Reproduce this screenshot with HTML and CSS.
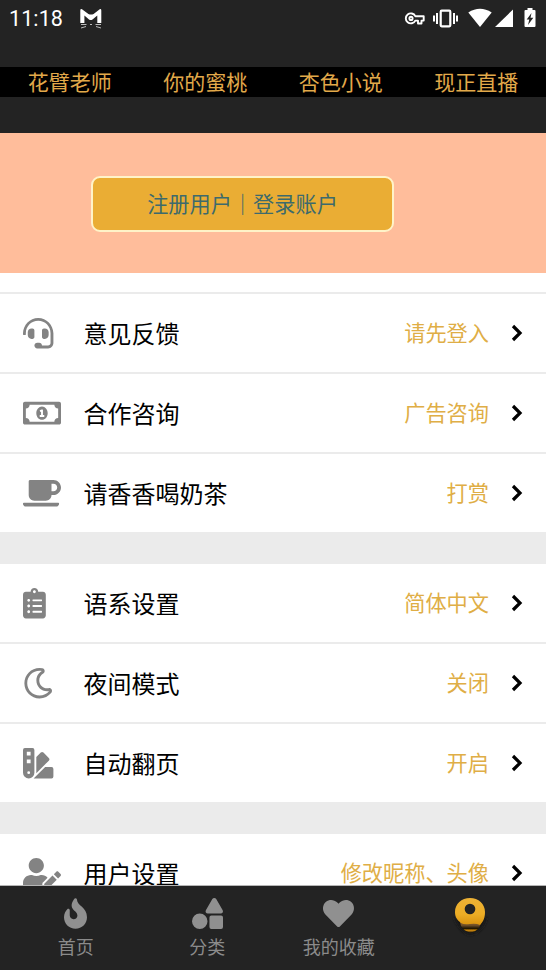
FILE: index.html
```html
<!DOCTYPE html>
<html lang="zh-CN">
<head>
<meta charset="utf-8">
<title>我的</title>
<link rel="stylesheet" href="styles.css">
</head>
<body>
<div class="screen">
  <header class="top">
    <div class="status">
      <span class="time">11:18</span>
      <svg class="cat" width="22" height="22" viewBox="0 0 22 22"><path d="M.3 15V2.500Q.3.600 2 1.200L8.400 6Q11 7 13.600 6L19.700 1.200Q21.300.600 21.300 2.500V15H17.300V7.500L12.500 11.500Q10.800 12.500 9 11.500L4.400 7.500V15Z" fill="#fff"/><path d="M1 16.500H6.500M1 20L6 18.500M15.500 16.500H21M16 18.500L21 20M10 16.500H12" stroke="#bbb" stroke-width="1" fill="none"/></svg>
      <div class="signals">
        <svg width="20" height="20" viewBox="0 0 20 20" fill="none" stroke="#fff" stroke-width="1.900"><path d="M10.300 8.200A5 5 0 1 0 10.300 12.600H13V15.500H16.500V12.600H18.700V8.200Z" stroke-linejoin="round"/><circle cx="6" cy="10.400" r="1.600"/></svg>
        <svg width="25" height="20" viewBox="0 0 25 20" fill="none" stroke="#fff"><rect x="7.700" y="2.700" width="9.600" height="15.600" rx="1" stroke-width="2.200"/><path d="M4 5V16M21 5V16" stroke-width="2"/><path d="M1 7.500V13.500M24 7.500V13.500" stroke-width="2"/></svg>
        <svg width="24" height="20" viewBox="0 0 24 20" fill="#fff"><path d="M.3 4.500Q12-3 23.700 4.500L12 19Z"/></svg>
        <svg width="18" height="20" viewBox="0 0 18 20" fill="#fff"><path d="M18 1.500V19H0Z"/></svg>
        <svg width="12" height="20" viewBox="0 0 12 20"><path d="M3.500 0H8.500V2H10.500Q11.500 2 11.500 3V18Q11.500 19 10.500 19H1.500Q.5 19 .5 18V3Q.5 2 1.500 2H3.500Z" fill="#fff"/><path d="M7.500 5L2.700 11.500H5.300L4 17L9.300 9.800H6.500Z" fill="#232323"/></svg>
      </div>
    </div>
    <nav class="links"><a>花臂老师</a><a>你的蜜桃</a><a>杏色小说</a><a>现正直播</a></nav>
  </header>

  <section class="account"><button class="login">注册用户｜登录账户</button></section>

  <main class="settings">
    <section class="group first">
      <div class="row">
        <svg class="icon" viewBox="0 0 640 512"><path d="M192 208c0-17.670-14.330-32-32-32h-16c-35.350 0-64 28.650-64 64v48c0 35.350 28.650 64 64 64h16c17.670 0 32-14.330 32-32V208zm176 144c35.350 0 64-28.650 64-64v-48c0-35.350-28.650-64-64-64h-16c-17.670 0-32 14.330-32 32v112c0 17.670 14.330 32 32 32h16zM256 0C113.180 0 4.580 118.830 0 256v16c0 8.840 7.160 16 16 16h16c8.840 0 16-7.160 16-16v-16c0-114.690 93.310-208 208-208s208 93.310 208 208h-.12c.08 2.430.12 165.720.12 165.720 0 23.350-18.930 42.280-42.280 42.280H320c0-26.510-21.490-48-48-48h-32c-26.510 0-48 21.490-48 48s21.490 48 48 48h181.720c49.860 0 90.280-40.420 90.280-90.280V256C507.420 118.830 398.820 0 256 0z"/></svg>
        <span class="label">意见反馈</span><span class="value">请先登入</span>
        <svg class="chevron" viewBox="0 0 12 18"><path d="M2 2L9 9L2 16"/></svg>
      </div>
      <div class="row">
        <svg class="icon" viewBox="0 0 640 512"><path d="M320 144c-53.020 0-96 50.140-96 112 0 61.850 42.980 112 96 112 53 0 96-50.130 96-112 0-61.860-42.980-112-96-112zm40 168c0 4.420-3.580 8-8 8h-64c-4.420 0-8-3.580-8-8v-16c0-4.420 3.580-8 8-8h16v-55.440l-.47.310a7.992 7.992 0 0 1-11.090-2.220l-8.880-13.310a7.992 7.992 0 0 1 2.220-11.090l15.330-10.220a23.990 23.990 0 0 1 13.310-4.030H328c4.420 0 8 3.580 8 8v88h16c4.420 0 8 3.580 8 8v16zM608 64H32C14.330 64 0 78.330 0 96v320c0 17.670 14.330 32 32 32h576c17.670 0 32-14.330 32-32V96c0-17.670-14.330-32-32-32zm-16 272c-35.350 0-64 28.650-64 64H112c0-35.350-28.650-64-64-64V176c35.350 0 64-28.650 64-64h416c0 35.350 28.650 64 64 64v160z"/></svg>
        <span class="label">合作咨询</span><span class="value">广告咨询</span>
        <svg class="chevron" viewBox="0 0 12 18"><path d="M2 2L9 9L2 16"/></svg>
      </div>
      <div class="row">
        <svg class="icon" viewBox="0 0 640 512"><path d="M192 384h192c53 0 96-43 96-96h32c70.600 0 128-57.400 128-128S582.600 32 512 32H120c-13.300 0-24 10.700-24 24v232c0 53 43 96 96 96zM512 96c35.300 0 64 28.700 64 64s-28.700 64-64 64h-32V96h32zm47.700 384H48.300c-47.600 0-61-64-36-64h583.300c25 0 11.800 64-35.900 64z"/></svg>
        <span class="label">请香香喝奶茶</span><span class="value">打赏</span>
        <svg class="chevron" viewBox="0 0 12 18"><path d="M2 2L9 9L2 16"/></svg>
      </div>
    </section>

    <section class="group">
      <div class="row">
        <svg class="icon" viewBox="0 0 640 512"><path d="M336 64h-80c0-35.300-28.700-64-64-64s-64 28.700-64 64H48C21.500 64 0 85.500 0 112v352c0 26.500 21.500 48 48 48h288c26.500 0 48-21.500 48-48V112c0-26.500-21.500-48-48-48zM96 424c-13.300 0-24-10.700-24-24s10.700-24 24-24 24 10.700 24 24-10.700 24-24 24zm0-96c-13.300 0-24-10.700-24-24s10.700-24 24-24 24 10.700 24 24-10.700 24-24 24zm0-96c-13.300 0-24-10.700-24-24s10.700-24 24-24 24 10.700 24 24-10.700 24-24 24zm96-192c13.300 0 24 10.700 24 24s-10.700 24-24 24-24-10.700-24-24 10.700-24 24-24zm128 368c0 4.400-3.600 8-8 8H168c-4.400 0-8-3.600-8-8v-16c0-4.400 3.600-8 8-8h144c4.400 0 8 3.600 8 8v16zm0-96c0 4.400-3.600 8-8 8H168c-4.400 0-8-3.600-8-8v-16c0-4.400 3.600-8 8-8h144c4.400 0 8 3.600 8 8v16zm0-96c0 4.400-3.600 8-8 8H168c-4.400 0-8-3.600-8-8v-16c0-4.400 3.600-8 8-8h144c4.400 0 8 3.600 8 8v16z"/></svg>
        <span class="label">语系设置</span><span class="value">简体中文</span>
        <svg class="chevron" viewBox="0 0 12 18"><path d="M2 2L9 9L2 16"/></svg>
      </div>
      <div class="row">
        <svg class="icon" viewBox="0 0 640 512"><path d="M279.135 512c78.756 0 150.982-35.804 198.844-94.775 28.270-34.831-2.558-85.722-46.249-77.401-82.348 15.683-158.272-47.268-158.272-130.792 0-48.424 26.060-92.292 67.434-115.836 38.745-22.050 28.999-80.788-15.022-88.919A257.936 257.936 0 0 0 279.135 0c-141.360 0-256 114.575-256 256 0 141.360 114.576 256 256 256zm0-464c12.985 0 25.689 1.201 38.016 3.478-54.760 31.163-91.693 90.042-91.693 157.554 0 113.848 103.641 199.200 215.252 177.944C402.574 433.964 344.366 464 279.135 464c-114.875 0-208-93.125-208-208s93.125-208 208-208z"/></svg>
        <span class="label">夜间模式</span><span class="value">关闭</span>
        <svg class="chevron" viewBox="0 0 12 18"><path d="M2 2L9 9L2 16"/></svg>
      </div>
      <div class="row">
        <svg class="icon" viewBox="0 0 640 512"><path d="M434.660 167.710L344.500 77.360a31.830 31.830 0 0 0-45-.07l-.07.070L224 152.880V424L434.660 212.900A32 32 0 0 0 434.660 167.710ZM480 320H373.090L186.680 506.510c-2.060 2.070-4.500 3.580-6.680 5.490H480a32 32 0 0 0 32-32V352A32 32 0 0 0 480 320ZM192 32A32 32 0 0 0 160 0H32A32 32 0 0 0 0 32V416a96 96 0 0 0 192 0ZM96 440a24 24 0 1 1 24-24A24 24 0 0 1 96 440Zm32-184H64V192h64Zm0-128H64V64h64Z"/></svg>
        <span class="label">自动翻页</span><span class="value">开启</span>
        <svg class="chevron" viewBox="0 0 12 18"><path d="M2 2L9 9L2 16"/></svg>
      </div>
    </section>

    <section class="group">
      <div class="row">
        <svg class="icon" viewBox="0 0 640 512"><path d="M224 256c70.700 0 128-57.300 128-128S294.700 0 224 0 96 57.300 96 128s57.300 128 128 128zm89.600 32h-16.700c-22.200 10.200-46.900 16-72.900 16s-50.600-5.800-72.900-16h-16.700C60.200 288 0 348.200 0 422.400V464c0 26.500 21.500 48 48 48h274.900c-2.400-6.800-3.400-14-2.600-21.300l6.800-60.900 1.200-11.100 7.900-7.900 77.300-77.300c-24.500-27.700-60-45.500-99.900-45.500zm45.300 145.300l-6.800 61c-1.100 10.200 7.500 18.800 17.600 17.600l60.900-6.800 137.900-137.900-71.700-71.700-137.900 137.800zM633 268.900L595.100 231c-9.300-9.300-24.500-9.300-33.800 0l-37.800 37.800-4.100 4.100 71.800 71.700 41.800-41.800c9.300-9.400 9.300-24.500 0-33.900z"/></svg>
        <span class="label">用户设置</span><span class="value">修改昵称、头像</span>
        <svg class="chevron" viewBox="0 0 12 18"><path d="M2 2L9 9L2 16"/></svg>
      </div>
    </section>
  </main>

  <footer class="tabs">
    <a class="tab"><svg width="23" height="31" viewBox="0 0 384 512"><path d="M216 23.860c0-23.800-30.650-32.770-44.150-13.040C48 191.850 224 200 224 288c0 35.630-29.110 64.460-64.850 63.990-35.170-.45-63.150-29.770-63.150-64.940v-85.510c0-21.700-26.470-32.230-41.430-16.500C27.800 213.160 0 261.330 0 320c0 105.870 86.130 192 192 192s192-86.130 192-192c0-170.290-168-193-168-296.140z"/></svg><span>首页</span></a>
    <a class="tab"><svg width="31" height="31" viewBox="0 0 512 512"><path d="M128 256A128 128 0 1 0 256 384 128 128 0 0 0 128 256Zm379-54.860L400.070 18.290a37.260 37.260 0 0 0-64.140 0L229 201.140C214.760 225.520 232.580 256 261.090 256H474.910C503.420 256 521.240 225.520 507 201.140ZM480 288H320a32 32 0 0 0-32 32V480a32 32 0 0 0 32 32H480a32 32 0 0 0 32-32V320A32 32 0 0 0 480 288Z"/></svg><span>分类</span></a>
    <a class="tab"><svg width="31" height="31" viewBox="0 0 512 512"><path d="M462.300 62.600C407.500 15.900 326 24.300 275.700 76.200L256 96.500l-19.700-20.300C186.100 24.300 104.500 15.900 49.700 62.600c-62.800 53.600-66.100 149.800-9.900 207.900l193.500 199.800c12.500 12.900 32.800 12.900 45.300 0l193.500-199.800c56.300-58.100 53-154.300-9.800-207.900z"/></svg><span>我的收藏</span></a>
    <a class="tab active">
      <svg width="50" height="42" viewBox="0 0 50 42">
        <defs>
          <linearGradient id="gold" x1="0" y1="0" x2="0" y2="1"><stop offset="0" stop-color="#edb236"/><stop offset=".6" stop-color="#edad25"/><stop offset="1" stop-color="#d9930f"/></linearGradient>
          <linearGradient id="base" x1="0" y1="0" x2="0" y2="1"><stop offset="0" stop-color="#a8712a"/><stop offset=".5" stop-color="#70502a"/><stop offset=".72" stop-color="#1c1505"/><stop offset=".85" stop-color="#d08a08"/><stop offset="1" stop-color="#3c2908"/></linearGradient>
          <filter id="soft" x="-30%" y="-30%" width="160%" height="160%"><feGaussianBlur stdDeviation="1.500"/></filter>
          <filter id="edge"><feGaussianBlur stdDeviation=".5"/></filter>
        </defs>
        <path d="M9 20Q16 36 25 37Q38 35 42 20Z" fill="#171717" filter="url(#soft)"/>
        <path d="M14 20H38L34 30Q30 34 25 34.500Q19 33 16 28Z" fill="url(#base)" filter="url(#edge)"/>
        <path d="M25 0C33.500 0 40 6 40 14C40 20 38 24 35 27Q31 25 25 26Q19 27 16 25C12 22 10 19 10 14C10 6 16.500 0 25 0Z" fill="url(#gold)"/>
        <circle cx="25" cy="11" r="5.300" fill="#232323"/>
      </svg>
    </a>
  </footer>
</div>
</body>
</html>
```
FILE: styles.css
```css
* { box-sizing: border-box; }

body {
  margin: 0;
  background: #fff;
  font-family: "Noto Sans CJK SC", sans-serif;
  font-weight: 400;
}

svg { display: block; flex: none; overflow: visible; }

.screen {
  width: 546px;
  height: 970px;
  overflow: hidden;
  display: flex;
  flex-direction: column;
}

.top { flex: none; height: 133px; background: #232323; }

.status {
  display: flex;
  align-items: flex-start;
  height: 67px;
  padding: 8px 10px 0 9px;
}

.time {
  width: 71px;
  font: 400 21.5px/22px Roboto, sans-serif;
  letter-spacing: .1px;
  color: #fff;
}

.signals { display: flex; margin-left: auto; }
.signals svg:nth-child(2) { margin-left: 8px; }
.signals svg:nth-child(3) { margin-left: 10px; }
.signals svg:nth-child(4) { margin-left: 3px; }
.signals svg:nth-child(5) { margin-left: 11px; }

.links {
  display: flex;
  height: 30px;
  padding: 0 2px;
  background: #000;
  color: #e2a94a;
  font-size: 21px;
  line-height: 28px;
}
.links a { flex: 1; text-align: center; }

.account {
  flex: none;
  height: 140px;
  padding: 43px 152px 0 91px;
  background: #ffbd9b;
}

.login {
  display: block;
  width: 100%;
  height: 56px;
  padding: 0 0 2px;
  border: 2px solid #fff3c8;
  border-radius: 9px;
  background: #eaad34;
  color: #3d6a6c;
  font: inherit;
  font-size: 21.2px;
  line-height: 50px;
}

.settings {
  flex: 1;
  min-height: 0;
  overflow: hidden;
  display: flex;
  flex-direction: column;
  gap: 32px;
  background: #ebebeb;
}

.group { flex: none; background: #fff; }
.first { padding-top: 19px; }
.first .row:first-child { border-top: 2px solid #ebebeb; height: 80px; }

.row {
  display: flex;
  align-items: center;
  height: 78px;
  padding: 0 23px 0 23px;
}
.row + .row { border-top: 2px solid #ebebeb; height: 80px; }

.icon { width: 38px; height: 30.4px; margin-right: 22.5px; fill: #838383; }
.label { flex: 1; padding-bottom: 1px; font-size: 24px; line-height: 35px; color: #000; }
.value { padding-bottom: 2px; font-size: 21.2px; line-height: 30px; color: #dfae46; }
.chevron {
  width: 12px;
  height: 18px;
  margin-left: 22px;
  fill: none;
  stroke: #000;
  stroke-width: 3.2;
}

.tabs {
  flex: none;
  display: flex;
  height: 85px;
  padding: 12px 10px 0;
  border-top: 1px solid #b5b5b5;
  background: #232323;
}

.tab {
  flex: 1;
  display: flex;
  flex-direction: column;
  align-items: center;
  gap: 4px;
  color: #8b8b8b;
  fill: #909090;
  font-size: 18px;
  line-height: 27px;
}
```
